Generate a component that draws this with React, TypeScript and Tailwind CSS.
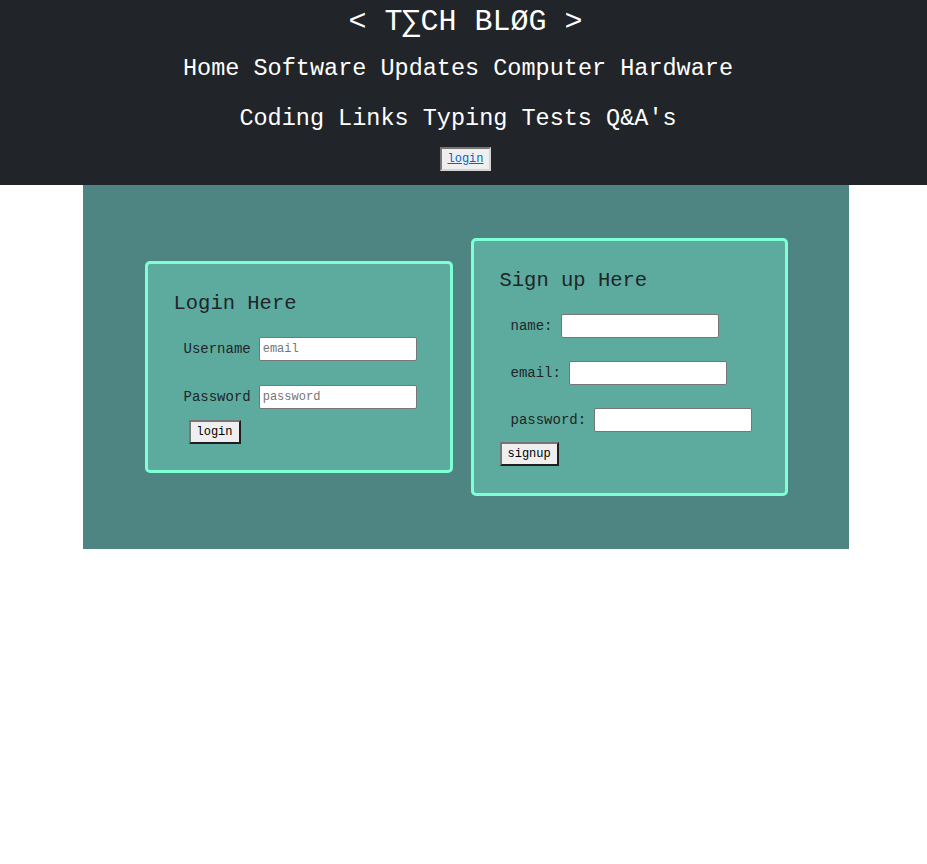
import React from "react"

const mono = "font-['Liberation_Mono','DejaVu_Sans_Mono',monospace]"

function Field({ label, placeholder }: { label: string; placeholder?: string }) {
  return (
    <div className="flex items-center gap-[8px]">
      <label className="text-[14px] leading-[20px] text-[#212529]">{label}</label>
      <input
        className="h-[24px] w-[158px] rounded-[2px] border border-[#767676] bg-white px-[3px] text-[12px] text-black placeholder:text-[#757575]"
        placeholder={placeholder}
      />
    </div>
  )
}

function FormButton({ children }: { children: React.ReactNode }) {
  return (
    <button className="h-[24px] border-2 border-t-[#767676] border-l-[#767676] border-r-[#1f1f1f] border-b-[#1f1f1f] bg-[#efefef] px-[6px] text-[12px] leading-[18px] text-black">
      {children}
    </button>
  )
}

export default function App() {
  return (
    <div className={`min-h-[864px] bg-white ${mono}`}>
      <header className="flex flex-col items-center bg-[#212529] pb-[14px] text-white">
        <h1 className="mt-[2px] pl-[4px] text-[30px] leading-[40px]">&lt; T∑CH BLØG &gt;</h1>
        <nav className="mt-[2px] pr-[11px] text-center text-[23.5px] leading-[50px]">
          <div>
            <a>Home</a> <a>Software Updates</a> <a>Computer Hardware</a>
          </div>
          <div>
            <a>Coding Links</a> <a>Typing Tests</a> <a>Q&amp;A's</a>
          </div>
        </nav>
        <button className="mt-[3px] ml-[4px] h-[24px] border-2 border-t-[#767676] border-l-[#767676] border-r-[#d4d4d4] border-b-[#d4d4d4] bg-[#efefef] px-[5px] text-[12px] leading-[18px]">
          <a className="text-[#0066cc] underline">login</a>
        </button>
      </header>

      <main className="ml-[83px] flex h-[364px] w-[766px] items-center justify-center gap-[18px] bg-[#4e8582]">
        <form className="w-[308px] rounded-[5px] border-[3px] border-[#7fffd4] bg-[#5cab9e] px-[26px] pt-[28px] pb-[26px]">
          <h2 className="text-[20.5px] leading-[24px] text-[#212529]">Login Here</h2>
          <div className="ml-[10px] mt-[21px] flex flex-col gap-[24px]">
            <Field label="Username" placeholder="email" />
            <Field label="Password" placeholder="password" />
          </div>
          <div className="ml-[15px] mt-[10px]">
            <FormButton>login</FormButton>
          </div>
        </form>

        <form className="w-[317px] rounded-[5px] border-[3px] border-[#7fffd4] bg-[#5cab9e] px-[26px] pt-[28px] pb-[27px]">
          <h2 className="text-[20.5px] leading-[24px] text-[#212529]">Sign up Here</h2>
          <div className="ml-[11px] mt-[21px] flex flex-col gap-[23px]">
            <Field label="name:" />
            <Field label="email:" />
            <Field label="password:" />
          </div>
          <div className="mt-[9px]">
            <FormButton>signup</FormButton>
          </div>
        </form>
      </main>
    </div>
  )
}
